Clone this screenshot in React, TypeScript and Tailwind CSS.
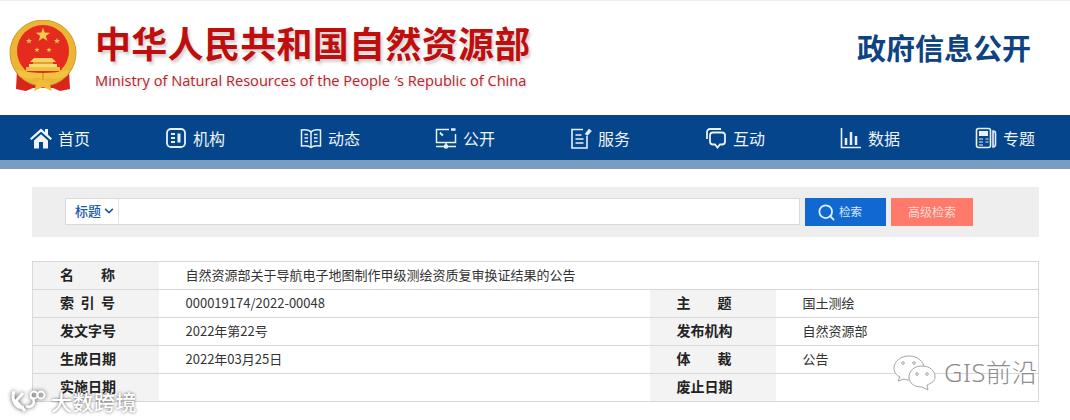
import React from 'react'
import { FaChevronDown } from 'react-icons/fa'
import { Search } from 'lucide-react'

const cjk = "font-['Noto_Sans_CJK_SC','Noto_Sans',sans-serif]"

const Star = ({ x, y, r }: { x: number; y: number; r: number }) => {
  const pts = Array.from({ length: 10 }, (_, i) => {
    const a = (Math.PI / 5) * i - Math.PI / 2
    const d = i % 2 === 0 ? r : r * 0.4
    return `${x + d * Math.cos(a)},${y + d * Math.sin(a)}`
  }).join(' ')
  return <polygon points={pts} fill="#f6c94a" />
}

const Emblem = () => (
  <svg width="68" height="74" viewBox="0 0 68 74" className="shrink-0">
    {/* ribbons */}
    <path d="M8 50 L7 69 L17 71 L24 68 L44 68 L51 71 L61 69 L60 50 Z" fill="#d8261c" />
    {/* wreath */}
    <ellipse cx="34" cy="33" rx="33" ry="33" fill="#ecb634" />
    <ellipse cx="34" cy="33" rx="33" ry="33" fill="none" stroke="#cf9a2a" strokeWidth="1" />
    <ellipse cx="34" cy="31" rx="26" ry="26" fill="#e42b1e" />
    <Star x={34} y={15} r={7.5} />
    <Star x={20} y={21} r={3.2} />
    <Star x={48} y={21} r={3.2} />
    <Star x={28} y={30} r={2.8} />
    <Star x={40} y={30} r={2.8} />
    {/* gate */}
    <path d="M25 38 H43 L47 42 H21 Z" fill="#f6d060" />
    <rect x="24" y="42" width="20" height="2" fill="#e59f2c" />
    <rect x="20" y="44" width="28" height="3" fill="#f8dc7a" />
    <rect x="17" y="47" width="34" height="4" fill="#f0c040" />
    {/* base with knot */}
    <path d="M8 50 Q22 53 34 53 Q46 53 60 50 L58 56 Q48 60 41 58 Q37 57 34 60 Q31 57 27 58 Q20 60 10 56 Z" fill="#f2c240" />
    <path d="M25 71 L28 62 L34 59 L40 62 L43 71 L34 67 Z" fill="#f0bd3a" />
    <path d="M34 53v7" stroke="#c98a20" strokeWidth="1" />
  </svg>
)

const iconCls = 'w-[22px] h-[22px] fill-none stroke-[#e8f0f8]'

const navItems: { label: string; icon: React.ReactNode }[] = [
  {
    label: '首页',
    icon: (
      <svg viewBox="0 0 22 22" className="w-[22px] h-[22px] fill-[#eef3f8]">
        <path d="M11 1.5 L15 5 V2 H18 V7.8 L22 11.5 L20.5 13 L11 4.8 L1.5 13 L0 11.5 Z" />
        <path d="M4 13.5 L11 7.3 L18 13.5 V21.5 H13 V15 H9 V21.5 H4 Z" />
      </svg>
    ),
  },
  {
    label: '机构',
    icon: (
      <svg viewBox="0 0 22 22" className={iconCls} strokeWidth="1.8">
        <rect x="2" y="2" width="18" height="18" rx="4" />
        <path d="M6 7h4M6 11h4M6 15h4" />
        <path d="M14 6.5v9" strokeWidth="3" />
      </svg>
    ),
  },
  {
    label: '动态',
    icon: (
      <svg viewBox="0 0 22 22" className={iconCls} strokeWidth="1.5">
        <path d="M11 5 C9 2.5 5 2.5 1.5 3 V19 C5 18.5 9 18.5 11 20.5 C13 18.5 17 18.5 20.5 19 V3 C17 2.5 13 2.5 11 5 Z" />
        <path d="M11 5v15M4.5 7.5h3.5M4.5 11h3.5M4.5 14.5h3.5M14 7.5h3.5M14 11h3.5M14 14.5h3.5" />
      </svg>
    ),
  },
  {
    label: '公开',
    icon: (
      <svg viewBox="0 0 22 22" className={iconCls} strokeWidth="1.5">
        <path d="M14 2.5H1.5V15.5H20.5V7" />
        <path d="M16 2.5h4.5" strokeWidth="2.5" />
        <path d="M11 15.5v3M1 19.5h20" />
        <circle cx="11" cy="19.5" r="1.6" className="fill-[#e8f0f8]" />
        <path d="M5 6l3 2.5M5 6h1" strokeWidth="2" />
      </svg>
    ),
  },
  {
    label: '服务',
    icon: (
      <svg viewBox="0 0 22 22" className={iconCls} strokeWidth="1.6">
        <path d="M13 2.5H2V21H17V9" />
        <path d="M5.5 8h6M5.5 12h8M5.5 16h8" />
        <path d="M15 7l4-5 2.5 2-4 4.5z" className="fill-[#e8f0f8]" strokeWidth="0.5" />
      </svg>
    ),
  },
  {
    label: '互动',
    icon: (
      <svg viewBox="0 0 22 22" className={iconCls} strokeWidth="1.8">
        <path d="M2 12V5a3 3 0 0 1 3-3h11" />
        <path d="M8 5.5h9a3 3 0 0 1 3 3v6a3 3 0 0 1-3 3h-2l-2.5 3-2.5-3H8a3 3 0 0 1-3-3v-6a3 3 0 0 1 3-3z" />
      </svg>
    ),
  },
  {
    label: '数据',
    icon: (
      <svg viewBox="0 0 22 22" className={iconCls} strokeWidth="2">
        <path d="M1.5 1v19.5H21" strokeWidth="1.6" />
        <path d="M6 18V11M11 18V5M16 18V9" strokeWidth="2.5" />
      </svg>
    ),
  },
  {
    label: '专题',
    icon: (
      <svg viewBox="0 0 22 22" className={iconCls} strokeWidth="1.6">
        <rect x="1.5" y="1.5" width="14" height="19" rx="2" />
        <rect x="4" y="4" width="9" height="5" className="fill-[#e8f0f8]" strokeWidth="0" />
        <path d="M4 12h4M4 15h4M4 18h4M10.5 12h3M10.5 15h3" strokeWidth="1.2" />
        <path d="M18 4c1.5 0 2.5 1 2.5 2.5V17c0 1.5-1 3-2.5 3z" />
      </svg>
    ),
  },
]

// spread the characters of a short label over the column, as the original does
const Label = ({ text }: { text: string }) => (
  <div className="flex w-[55px] justify-between">
    {text.split('').map((c, i) => (
      <span key={i}>{c}</span>
    ))}
  </div>
)

const rows = [
  { a: '名称', b: '自然资源部关于导航电子地图制作甲级测绘资质复审换证结果的公告', full: true },
  { a: '索引号', b: '000019174/2022-00048', c: '主题', d: '国土测绘' },
  { a: '发文字号', b: '2022年第22号', c: '发布机构', d: '自然资源部' },
  { a: '生成日期', b: '2022年03月25日', c: '体裁', d: '公告' },
  { a: '实施日期', b: '', c: '废止日期', d: '' },
]

const labelCell = 'bg-[#f3f3f3] pl-[27px] pb-[2px] text-[14px] font-bold text-[#222] border-t border-[#d8d8d8] align-middle'
const valueCell = 'pl-[27px] pb-[2px] text-[13px] text-[#333] border-t border-[#d8d8d8] align-middle'

export default function App() {
  return (
    <div className={`relative w-[1070px] h-[420px] overflow-hidden bg-white ${cjk}`}>
      <header className="h-[115px] flex items-start border-t border-[#eeeeee]">
        <div className="flex pl-[9px] pt-[19px]">
          <Emblem />
          <div className="ml-[18px] -mt-[3px]">
            <div className="h-[50px] flex items-center text-[36px] tracking-[0.3px] font-bold leading-none text-[#c00d0d] [text-shadow:2px_3px_3px_rgba(0,0,0,0.18)] whitespace-nowrap">
              中华人民共和国自然资源部
            </div>
            <div className="mt-[3px] font-['Open_Sans',sans-serif] text-[14.6px] leading-[20px] text-[#b8222a] [text-shadow:1px_2px_2px_rgba(0,0,0,0.15)] whitespace-nowrap">
              Ministry of Natural Resources of the People ′s Republic of China
            </div>
          </div>
        </div>
        <div className="ml-auto mr-[39px] mt-[26px] text-[29px] font-bold leading-[40px] text-[#0d4380]">
          政府信息公开
        </div>
      </header>

      <nav className="h-[45px] bg-[#04458c] flex pl-[30px] overflow-hidden">
        {navItems.map((item) => (
          <div key={item.label} className="w-[135px] shrink-0 flex items-center gap-[6px] text-[16px] text-[#eef3f8]">
            {item.icon}
            <span>{item.label}</span>
          </div>
        ))}
      </nav>
      <div className="h-[9px] bg-[#7a9cc0]" />

      <section className="ml-[32px] w-[1007px] mt-[18px] h-[50px] bg-[#eeeeee] flex items-start pt-[11px] pl-[33px]">
        <div className="flex w-[735px] h-[27px] bg-white border border-[#d9d9d9]">
          <div className="w-[53px] flex items-center pl-[9px] pb-[1px] gap-[3px] border-r border-[#e4e4e4] text-[13px] font-medium text-[#1a5ba6]">
            标题
            <FaChevronDown className="w-[10px] h-[10px]" />
          </div>
        </div>
        <button className="ml-[5px] w-[81px] h-[28px] bg-[#1268d1] flex items-center pl-[12px] gap-[3px] text-[11.5px] text-[#d8e8fb]">
          <Search className="w-[19px] h-[19px] text-[#e8f2ff]" strokeWidth={2.2} />
          检索
        </button>
        <button className="ml-[5px] w-[82px] h-[28px] bg-[#ff7a6a] text-[12px] text-[#ffd9d2]">
          高级检索
        </button>
      </section>

      <table className="ml-[32px] mt-[24px] w-[1007px] table-fixed border-collapse border border-[#d8d8d8]">
        <colgroup>
          <col className="w-[126px]" />
          <col className="w-[491px]" />
          <col className="w-[126px]" />
          <col />
        </colgroup>
        <tbody>
          {rows.map((r) => (
            <tr key={r.a} className="h-[28px]">
              <td className={labelCell}>
                <Label text={r.a} />
              </td>
              {r.full ? (
                <td colSpan={3} className={valueCell}>
                  {r.b}
                </td>
              ) : (
                <>
                  <td className={valueCell}>{r.b}</td>
                  <td className={labelCell}>
                    <Label text={r.c ?? ''} />
                  </td>
                  <td className={valueCell}>{r.d}</td>
                </>
              )}
            </tr>
          ))}
        </tbody>
      </table>

      {/* watermarks laid over the picture */}
      <div className="absolute left-[10px] top-[388px] flex items-center gap-[3px] text-white [text-shadow:0_0_3px_rgba(0,0,0,0.65)]">
        <svg width="38" height="26" viewBox="0 0 38 26" className="fill-none stroke-white drop-shadow-[0_0_2px_rgba(0,0,0,0.7)]" strokeWidth="3">
          <path d="M4 3 C1 12 6 21 14 19" />
          <path d="M13 5 L6 13 L15 23" />
          <circle cx="24" cy="7" r="3.5" strokeWidth="1.8" />
          <circle cx="31" cy="7" r="3.5" strokeWidth="1.8" />
          <path d="M16 18 a5 5 0 1 0 4 -9" strokeWidth="2.5" />
        </svg>
        <span className="text-[21px] leading-[26px] font-medium tracking-[0.5px] whitespace-nowrap">大数跨境</span>
      </div>
      <div className="absolute left-[893px] top-[353px] flex items-center gap-[8px] text-[#8d8d8d] [text-shadow:0_0_2px_#fff]">
        <svg width="43" height="38" viewBox="0 0 43 36" className="fill-white stroke-[#a4a4a4]" strokeWidth="1">
          <path d="M16 2 C7 2 1 8 1 14 C1 18 3 21 7 23 L5 27 L11 25 C13 26 15 26 17 26 C26 26 31 20 31 14 C31 8 25 2 16 2 Z" />
          <path d="M29 12 C21 12 16 17 16 23 C16 29 21 33 29 33 L35 36 L34 31 C39 29 42 27 42 23 C42 17 37 12 29 12 Z" />
          <circle cx="10" cy="9" r="1.3" />
          <circle cx="21" cy="9" r="1.3" />
          <circle cx="24" cy="20" r="1.3" />
          <circle cx="34" cy="20" r="1.3" />
        </svg>
        <span className="font-['Noto_Sans','Noto_Sans_CJK_SC',sans-serif] text-[25.5px] leading-[32px] font-light tracking-[0.5px] whitespace-nowrap">GIS前沿</span>
      </div>
    </div>
  )
}
